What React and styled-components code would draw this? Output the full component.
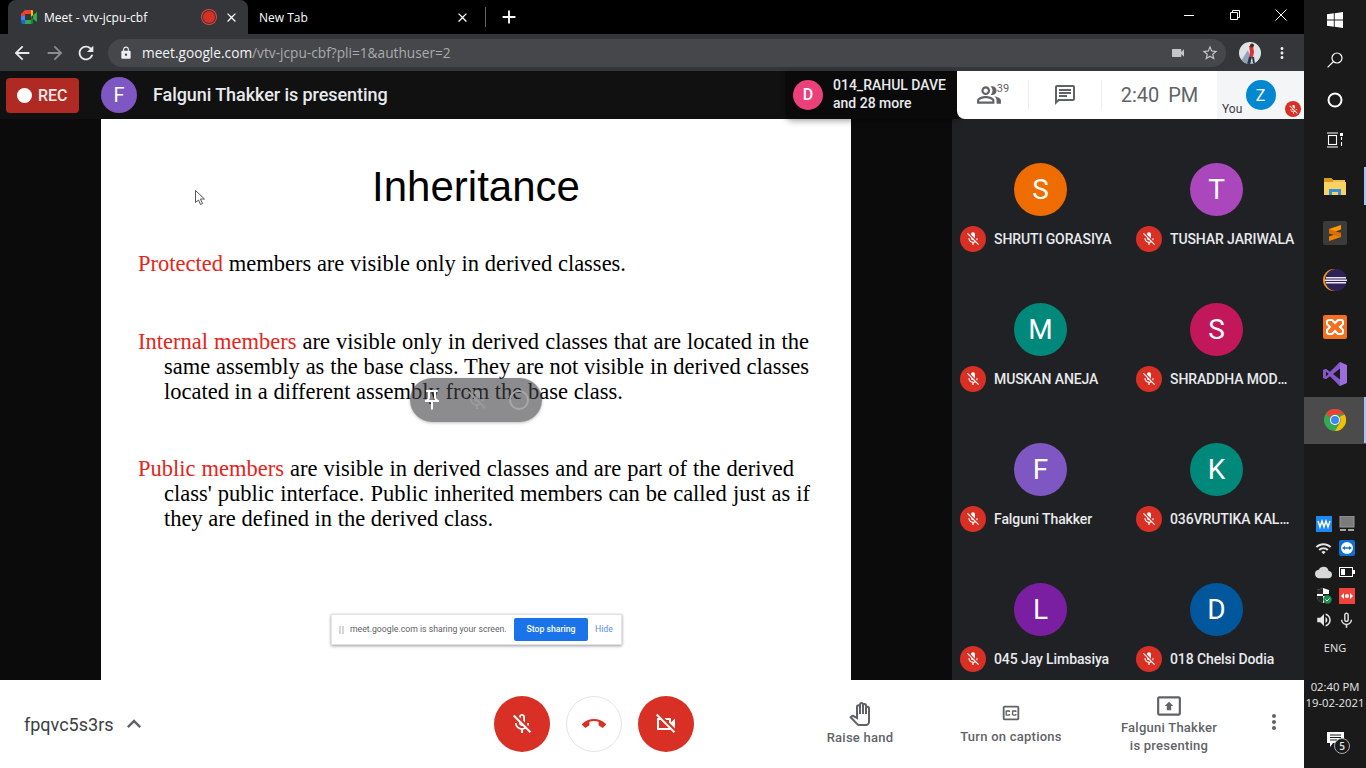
import React from 'react';
import styled, { createGlobalStyle } from 'styled-components';
import {
  MdArrowBack, MdArrowForward, MdRefresh, MdLock, MdStarBorder, MdVideocam, MdMoreVert,
  MdClose, MdAdd, MdMicOff, MdOutlineMicOff, MdOutlineVideocamOff, MdCallEnd, MdOutlinePeopleAlt, MdOutlineChat,
  MdOutlineClosedCaption, MdOutlinePresentToAll, MdOutlinePanTool, MdExpandLess,
  MdOutlinePushPin, MdCloud, MdVolumeUp, MdMicNone, MdWifi,
} from 'react-icons/md';

const GlobalStyle = createGlobalStyle`
  html, body { margin: 0; padding: 0; height: 100%; overflow: hidden; background: #000; }
  * { box-sizing: border-box; }
  body { font-family: Roboto, "Liberation Sans", sans-serif; }
`;

const people = [
  { letter: 'S', color: '#ef6c00', name: 'SHRUTI GORASIYA' },
  { letter: 'T', color: '#ab47bc', name: 'TUSHAR JARIWALA' },
  { letter: 'M', color: '#00897b', name: 'MUSKAN ANEJA' },
  { letter: 'S', color: '#c2185b', name: 'SHRADDHA MODHIYA' },
  { letter: 'F', color: '#7e57c2', name: 'Falguni Thakker' },
  { letter: 'K', color: '#00897b', name: '036VRUTIKA KALARIYA' },
  { letter: 'L', color: '#7b1fa2', name: '045 Jay Limbasiya' },
  { letter: 'D', color: '#01579b', name: '018 Chelsi Dodia' },
];

const Screen = styled.div`
  display: flex;
  width: 1366px;
  height: 768px;
  overflow: hidden;
`;

const Main = styled.div`
  width: 1304px;
  display: flex;
  flex-direction: column;
`;

/* browser chrome */
const TabStrip = styled.div`
  height: 34px;
  background: #000;
  display: flex;
  align-items: flex-end;
  padding-left: 8px;
  color: #fff;
  font-family: "Open Sans", sans-serif;
  font-size: 12px;
`;

const Tab = styled.div`
  width: ${p => p.$width}px;
  height: 34px;
  display: flex;
  align-items: center;
  padding-left: ${p => p.$pad}px;
  padding-right: 9px;
  border-radius: 8px 8px 0 0;
  background: ${p => (p.$active ? '#35363a' : 'transparent')};
  svg { flex: none; }
`;

const TabTitle = styled.span`
  flex: 1;
  white-space: nowrap;
  margin-left: ${p => p.$gap || 0}px;
`;

const RecordDot = styled.span`
  width: 12px;
  height: 12px;
  margin-right: 9px;
  border-radius: 50%;
  background: #d93025;
  box-shadow: 0 0 0 1px #35363a, 0 0 0 2px #e8453c;
`;

const TabDivider = styled.span`
  width: 1px;
  height: 20px;
  margin: 0 12px 7px 6px;
  align-self: flex-end;
  background: #5f6368;
`;

const NewTab = styled.span`
  display: flex;
  align-self: center;
`;

const WindowControls = styled.div`
  margin-left: auto;
  display: flex;
  align-self: flex-start;
  padding-top: 9px;
`;

const WindowButton = styled.span`
  width: 46px;
  height: 12px;
  display: flex;
  align-items: center;
  justify-content: center;
`;

const Toolbar = styled.div`
  height: 37px;
  background: #35363a;
  display: flex;
  align-items: center;
  color: #e8eaed;
`;

const NavButton = styled.span`
  width: ${p => p.$width}px;
  display: flex;
  justify-content: center;
  color: ${p => (p.$dim ? '#8b8d90' : '#e8eaed')};
`;

const Omnibox = styled.div`
  width: 1118px;
  height: 28px;
  margin-left: 3px;
  border-radius: 14px;
  background: #46474a;
  display: flex;
  align-items: center;
  padding: 0 7px 0 11px;
  font-family: "Open Sans", sans-serif;
  font-size: 13.7px;
  color: #a9abae;
`;

const Url = styled.span`
  margin-left: 9px;
  flex: 1;
  b { font-weight: 400; color: #f1f3f4; }
`;

const OmniIcon = styled.span`
  display: flex;
  margin-left: ${p => p.$gap}px;
  color: #c4c6c9;
`;

const Profile = styled.span`
  width: 22px;
  height: 22px;
  margin-left: 13px;
  border-radius: 50%;
  overflow: hidden;
  display: flex;
`;

/* meet header */
const Header = styled.header`
  height: 48px;
  background: #111;
  display: flex;
  align-items: center;
  padding-left: 6px;
  position: relative;
  z-index: 2;
`;

const RecButton = styled.div`
  width: 73px;
  height: 35px;
  border-radius: 4px;
  background: #b02a24;
  color: #f6e9e8;
  display: flex;
  align-items: center;
  padding-left: 11px;
  gap: 6px;
  font-size: 16px;
  font-weight: 500;
`;

const RecDot = styled.span`
  width: 15px;
  height: 15px;
  border-radius: 50%;
  background: #fff;
`;

const Avatar = styled.span`
  flex: none;
  width: ${p => p.$size}px;
  height: ${p => p.$size}px;
  border-radius: 50%;
  background: ${p => p.$color};
  color: #fff;
  font-size: ${p => p.$font}px;
  display: flex;
  align-items: center;
  justify-content: center;
`;

const PresenterAvatar = styled(Avatar)`
  margin-left: 22px;
`;

const Presenter = styled.span`
  margin: 0 0 2px 16px;
  color: #e8eaed;
  font-size: 18px;
  font-weight: 500;
  letter-spacing: -.07px;
`;

const SpeakerCard = styled.div`
  margin-left: auto;
  width: 172px;
  height: 48px;
  padding-left: 8px;
  display: flex;
  align-items: center;
  gap: 10px;
  background: #0a0a0a;
  border-radius: 0 0 0 8px;
  box-shadow: 0 2px 6px rgba(0, 0, 0, .35);
  color: #e8eaed;
  font-size: 14px;
  font-weight: 500;
  line-height: 18px;
`;

const SpeakerText = styled.div`
  margin-bottom: 2px;
`;

const InfoBar = styled.div`
  width: 347px;
  height: 48px;
  background: #fff;
  border-radius: 0 0 0 8px;
  display: flex;
  align-items: center;
  color: #5f6368;
  position: relative;
`;

const InfoCell = styled.div`
  width: ${p => p.$width}px;
  height: 30px;
  display: flex;
  align-items: center;
  justify-content: center;
  border-right: ${p => (p.$divider ? '1px solid #eceef0' : 'none')};
`;

const PeopleCount = styled.sup`
  font-size: 11px;
  align-self: flex-start;
  margin: 3px 0 0 -5px;
  line-height: 12px;
`;

const Clock = styled.div`
  width: 115px;
  text-align: center;
  font-size: 20px;
  word-spacing: 4px;
`;

const SelfView = styled.div`
  flex: 1;
  height: 48px;
  background: #f3f5f7;
  position: relative;
  display: flex;
  justify-content: center;
  align-items: center;
`;

const YouLabel = styled.span`
  position: absolute;
  left: 5px;
  bottom: 3px;
  font-size: 12px;
  color: #3c4043;
`;

const MicBadge = styled.span`
  flex: none;
  width: ${p => p.$size}px;
  height: ${p => p.$size}px;
  border-radius: 50%;
  background: #d93025;
  color: #fff;
  display: flex;
  align-items: center;
  justify-content: center;
`;

const SelfMic = styled(MicBadge)`
  position: absolute;
  right: 3px;
  bottom: 2px;
`;

/* middle stage */
const Stage = styled.div`
  height: 561px;
  display: flex;
  background: #0b0b0b;
`;

const Slide = styled.section`
  width: 750px;
  margin-left: 101px;
  background: #fff;
  position: relative;
  padding: 45px 0 0 37px;
  font-family: "Liberation Serif", serif;
  font-size: 22.5px;
  line-height: 25px;
  color: #000;
`;

const SlideTitle = styled.h1`
  margin: 0 0 41px -37px;
  font-family: "Liberation Sans", sans-serif;
  font-weight: 400;
  font-size: 42px;
  line-height: 46px;
  text-align: center;
  color: #000;
`;

const SlidePara = styled.p`
  margin: 0 0 ${p => p.$after}px;
  white-space: nowrap;
`;

const SlideLine = styled.span`
  display: block;
  width: ${p => p.$width}px;
  margin-left: ${p => (p.$hang ? 26 : 0)}px;
  text-align: justify;
  text-align-last: justify;
`;

const Red = styled.span`
  color: #e8241a;
`;

const Cursor = styled.svg`
  position: absolute;
  left: 94px;
  top: 71px;
`;

const FloatPill = styled.div`
  position: absolute;
  left: 309px;
  top: 259px;
  width: 132px;
  height: 44px;
  border-radius: 22px;
  background: rgba(63, 64, 66, .6);
  box-shadow: 0 1px 3px rgba(0, 0, 0, .25);
  display: flex;
  align-items: center;
  justify-content: space-between;
  padding: 0 11px 0 10px;
`;

const PillIcon = styled.span`
  display: flex;
  color: ${p => p.$color};
`;

const PillRing = styled.span`
  width: 20px;
  height: 20px;
  margin-right: 2px;
  border-radius: 50%;
  border: 2px solid #a6a7a9;
`;

const ShareBar = styled.div`
  position: absolute;
  left: 230px;
  top: 495px;
  width: 291px;
  height: 31px;
  background: #fff;
  border: 1px solid #e2e3e5;
  box-shadow: 0 1px 3px rgba(0, 0, 0, .4);
  display: flex;
  align-items: center;
  padding-left: 7px;
  font-family: Roboto, sans-serif;
  font-size: 8.7px;
  line-height: 1;
  color: #5f6368;
`;

const Grip = styled.span`
  width: 5px;
  height: 8px;
  margin-right: 6px;
  border-left: 2px solid #d5d6d8;
  border-right: 2px solid #d5d6d8;
`;

const ShareText = styled.span`
  width: 157px;
  white-space: nowrap;
`;

const StopButton = styled.span`
  width: 74px;
  height: 23px;
  margin-left: 7px;
  border-radius: 2px;
  background: #1a73e8;
  color: #fff;
  font-weight: 500;
  display: flex;
  align-items: center;
  justify-content: center;
`;

const HideLink = styled.span`
  margin-left: 7px;
  color: #5b8ee0;
`;

const Participants = styled.aside`
  width: 352px;
  margin-left: 101px;
  background: #202124;
  padding-top: 44.4px;
  display: grid;
  grid-template-columns: 176px 176px;
  grid-auto-rows: 140px;
  overflow: hidden;
`;

const Tile = styled.div`
  padding-left: 8px;
  display: flex;
  flex-direction: column;
  min-width: 0;
`;

const TileAvatar = styled(Avatar)`
  margin: 0 0 9.6px 54px;
`;

const TileName = styled.div`
  display: flex;
  align-items: center;
  gap: 8px;
  color: #e8eaed;
  font-size: 14px;
  font-weight: 500;
  letter-spacing: -.1px;
`;

const NameText = styled.span`
  width: 126px;
  white-space: nowrap;
  overflow: hidden;
  text-overflow: ellipsis;
`;

/* bottom bar */
const BottomBar = styled.footer`
  height: 88px;
  background: #fff;
  display: flex;
  align-items: center;
  color: #5f6368;
`;

const MeetingCode = styled.div`
  width: 494px;
  padding-left: 24px;
  display: flex;
  align-items: center;
  gap: 6px;
  font-size: 18px;
  color: #3c4043;
  svg { color: #5f6368; }
`;

const CallControls = styled.div`
  display: flex;
  gap: 16px;
`;

const RoundButton = styled.span`
  width: 56px;
  height: 56px;
  border-radius: 50%;
  display: flex;
  align-items: center;
  justify-content: center;
  background: ${p => (p.$outlined ? '#fff' : '#d93025')};
  color: ${p => (p.$outlined ? '#d93025' : '#fff')};
  border: ${p => (p.$outlined ? '1px solid #e3e4e6' : 'none')};
`;

const Action = styled.div`
  width: ${p => p.$width}px;
  margin-left: ${p => p.$gap}px;
  display: flex;
  flex-direction: column;
  align-items: center;
  font-size: 13px;
  line-height: 18px;
  font-weight: 500;
  letter-spacing: .25px;
  color: #5f6368;
  text-align: center;
  white-space: nowrap;
`;

const ActionIcon = styled.span`
  display: flex;
  margin-bottom: ${p => p.$gap}px;
`;

const MoreButton = styled.span`
  display: flex;
  margin-left: 46px;
  margin-top: -4px;
  color: #5f6368;
`;

/* windows taskbar */
const Taskbar = styled.nav`
  width: 62px;
  height: 768px;
  background: #1a1a1a;
  display: flex;
  flex-direction: column;
  color: #fff;
`;

const SysSlot = styled.div`
  height: 40px;
  display: flex;
  align-items: center;
  justify-content: center;
`;

const AppList = styled.div`
  margin-top: 3px;
`;

const AppSlot = styled.div`
  height: 46.8px;
  display: flex;
  align-items: center;
  justify-content: center;
  position: relative;
  background: ${p => (p.$active ? '#4b4b4b' : 'transparent')};
  &::after {
    content: '';
    display: ${p => (p.$running ? 'block' : 'none')};
    position: absolute;
    right: 0;
    top: 50%;
    width: 2px;
    height: ${p => (p.$active ? 46 : 38)}px;
    transform: translateY(-50%);
    background: #a9c2ee;
  }
`;

const Tray = styled.div`
  margin-top: auto;
  display: flex;
  flex-direction: column;
  align-items: center;
  color: #e6e6e6;
  font-family: "Open Sans", sans-serif;
`;

const TrayGrid = styled.div`
  display: grid;
  grid-template-columns: 23px 23px;
  grid-auto-rows: 24px;
  align-items: center;
  justify-items: center;
`;

const TrayText = styled.div`
  font-size: ${p => p.$size}px;
  line-height: 16px;
  text-align: center;
  margin-top: ${p => p.$gap || 0}px;
  white-space: nowrap;
`;

const NoticeSlot = styled.div`
  height: 40px;
  margin-top: 8px;
  margin-bottom: 9px;
  position: relative;
  width: 30px;
  display: flex;
  align-items: center;
  justify-content: center;
`;

const NoticeCount = styled.span`
  position: absolute;
  right: 0;
  bottom: 5px;
  width: 16px;
  height: 16px;
  border-radius: 50%;
  border: 1px solid #aaa;
  background: #1a1a1a;
  font-size: 10px;
  font-weight: 600;
  line-height: 14px;
  text-align: center;
`;

const MeetLogo = () => (
  <svg width="16" height="14" viewBox="0 0 16 14">
    <path d="M4 0h6v4H4v2H0V4z" fill="#ea4335" />
    <path d="M0 6h4v4H0z" fill="#4285f4" />
    <path d="M0 10h4v4H2a2 2 0 0 1-2-2z" fill="#1967d2" />
    <path d="M4 10h6v4H4z" fill="#34a853" />
    <path d="M10 0h1a1 1 0 0 1 1 1v4l-2 2z" fill="#fbbc04" />
    <path d="M10 7l2 2v4a1 1 0 0 1-1 1h-1z" fill="#188038" />
    <path d="M12 5l4-3v10l-4-3z" fill="#34a853" />
  </svg>
);

const ProfilePhoto = () => (
  <svg width="22" height="22" viewBox="0 0 22 22">
    <rect width="22" height="22" fill="#dfe3e6" />
    <path d="M0 22L9 8l4 14z" fill="#8fa3b5" />
    <path d="M10 4l4 0 1 6-1 5h-4l1-5z" fill="#d8333a" />
    <circle cx="13" cy="3.500" r="2" fill="#4a2c22" />
    <path d="M10 15l-2 7h3l2-7zM13 15l1 7h2l-1-7z" fill="#26364a" />
  </svg>
);

const WindowsLogo = () => (
  <svg width="16" height="16" viewBox="0 0 16 16" fill="#fff">
    <path d="M0 2.300l6.800-1V7.600H0zM7.700 1.200L16 0v7.600H7.700zM0 8.400h6.800v6.300l-6.800-1zM7.700 8.400H16V16l-8.300-1.200z" />
  </svg>
);

const SearchGlyph = () => (
  <svg width="16" height="16" viewBox="0 0 16 16" fill="none" stroke="#fff" strokeWidth="1.200">
    <circle cx="10" cy="6" r="5" />
    <path d="M6.500 9.500L.6 15.400" />
  </svg>
);

const CortanaRing = () => (
  <svg width="16" height="16" viewBox="0 0 16 16" fill="none" stroke="#fff" strokeWidth="2">
    <circle cx="8" cy="8" r="6.500" />
  </svg>
);

const TaskViewGlyph = () => (
  <svg width="16" height="16" viewBox="0 0 16 16" fill="none" stroke="#fff" strokeWidth="1.100">
    <path d="M0 1h11M0 15h11" />
    <rect x="1.500" y="3.500" width="8" height="9" />
    <path d="M14.500 5v3M14.500 10v4" />
    <rect x="13" y="1" width="3" height="3" fill="#fff" stroke="none" />
  </svg>
);

const FolderIcon = () => (
  <svg width="22" height="18" viewBox="0 0 22 18">
    <path d="M0 2a1 1 0 0 1 1-1h6l2 2h12v14H0z" fill="#f0c14b" />
    <path d="M0 1h7l2 2v2H0z" fill="#d99a1c" />
    <path d="M0 5h22v13H0z" fill="#fad165" />
    <path d="M5 18v-6h12v6h-3v-3H8v3z" fill="#2f93d6" />
  </svg>
);

const SublimeIcon = () => (
  <svg width="24" height="24" viewBox="0 0 24 24">
    <rect width="24" height="24" rx="2" fill="#3b3b3b" />
    <path d="M18 4v4.500L6 12.500V8z" fill="#ff9800" />
    <path d="M6 20v-4.500L18 11.500V16z" fill="#f08200" />
    <path d="M6 8l12 4v4L6 12.500z" fill="#d96f00" />
  </svg>
);

const EclipseIcon = () => (
  <svg width="24" height="24" viewBox="0 0 24 24">
    <circle cx="11" cy="12" r="11" fill="#f7941e" />
    <circle cx="13" cy="12" r="11" fill="#2c2255" />
    <path d="M3 9h20v1.500H3zM2 11.500h22V13H2zM3 14h20v1.500H3z" fill="#e9e6f2" />
  </svg>
);

const XamppIcon = () => (
  <svg width="24" height="24" viewBox="0 0 24 24">
    <rect width="24" height="24" rx="2" fill="#f37021" />
    <path d="M6 5h3l3 3 3-3h3a2 2 0 0 1 2 2v2l-3 3 3 3v2a2 2 0 0 1-2 2h-3l-3-3-3 3H6a2 2 0 0 1-2-2v-2l3-3-3-3V7a2 2 0 0 1 2-2z" fill="none" stroke="#fff" strokeWidth="2" />
  </svg>
);

const VisualStudioIcon = () => (
  <svg width="24" height="24" viewBox="0 0 24 24">
    <path d="M17 0l7 3v18l-7 3-10-10-4 3-3-1V8l3-1 4 3z" fill="#9a6fdc" />
    <path d="M17 0L7 10 3 7 0 8v8l3 1 4-3 10 10z" fill="#7d4fc4" opacity=".75" />
    <path d="M17 6.500v11L10 12zM3 9.500v5L5.500 12z" fill="#1a1a1a" />
  </svg>
);

const ChromeIcon = () => (
  <svg width="22" height="22" viewBox="0 0 22 22">
    <circle cx="11" cy="11" r="11" fill="#34a853" />
    <path d="M11 0a11 11 0 0 1 9.530 5.500H11a5.500 5.500 0 0 0-5.200 3.700L2.400 3.900A11 11 0 0 1 11 0z" fill="#ea4335" />
    <path d="M20.530 5.500A11 11 0 0 1 11 22l4.500-7.500A5.500 5.500 0 0 0 15.500 8z" fill="#fbbc04" />
    <circle cx="11" cy="11" r="5" fill="#fff" />
    <circle cx="11" cy="11" r="4" fill="#4285f4" />
  </svg>
);

const WavesTray = () => (
  <svg width="16" height="16" viewBox="0 0 16 16">
    <rect width="16" height="16" fill="#1e88f5" />
    <path d="M2 5l2 6 2-6 2 6 2-6 2 6 2-6" fill="none" stroke="#fff" strokeWidth="1.400" />
  </svg>
);

const MonitorTray = () => (
  <svg width="16" height="16" viewBox="0 0 16 16">
    <rect x="1" y="0" width="14" height="11" fill="#7b7b7b" stroke="#9a9a9a" />
    <path d="M1 13h6v2H1zM9 13h6v2H9z" fill="#a5a5a5" />
  </svg>
);

const TeamViewerTray = () => (
  <svg width="16" height="16" viewBox="0 0 16 16">
    <rect width="16" height="16" rx="2" fill="#0e6fd6" />
    <circle cx="8" cy="8" r="6" fill="#fff" />
    <path d="M3 8l3-2v1.300h4V6l3 2-3 2V8.700H6V10z" fill="#0e6fd6" />
  </svg>
);

const BatteryTray = () => (
  <svg width="16" height="10" viewBox="0 0 16 10" fill="none">
    <rect x=".5" y=".5" width="13" height="9" stroke="#fff" />
    <rect x="2" y="2" width="4" height="6" fill="#fff" />
    <rect x="14" y="3" width="2" height="4" fill="#fff" />
  </svg>
);

const ShieldTray = () => (
  <svg width="16" height="16" viewBox="0 0 16 16">
    <path d="M7 0l6 2v6c0 4-3 6-6 7-3-1-6-3-6-7V2z" fill="#fff" />
    <path d="M7 0v15c-3-1-6-3-6-7h12V6H1V2z" fill="#111" opacity=".9" />
    <circle cx="11.500" cy="11.500" r="4.200" fill="#1c8f4a" />
    <path d="M9.500 11.500l1.500 1.500 2.500-2.500" fill="none" stroke="#fff" />
  </svg>
);

const RedTray = () => (
  <svg width="16" height="16" viewBox="0 0 16 16">
    <rect width="16" height="16" fill="#f0443a" />
    <path d="M2 8l3-3v6zM14 8l-3-3v6z" fill="#fff" />
    <circle cx="8" cy="8" r="2" fill="#fff" />
  </svg>
);

const NoticeGlyph = () => (
  <svg width="17" height="15" viewBox="0 0 17 15">
    <path d="M0 0h17v11H6l-3 4v-4H0z" fill="#fff" />
    <path d="M3 3h11M3 5.500h11M3 8h7" stroke="#1a1a1a" />
  </svg>
);

const Slides = () => (
  <Slide>
    <SlideTitle>Inheritance</SlideTitle>
    <SlidePara $after={53}>
      <SlideLine $width={488}><Red>Protected</Red> members are visible only in derived classes.</SlideLine>
    </SlidePara>
    <SlidePara $after={52}>
      <SlideLine $width={671}><Red>Internal members</Red> are visible only in derived classes that are located in the</SlideLine>
      <SlideLine $hang $width={645}>same assembly as the base class. They are not visible in derived classes</SlideLine>
      <SlideLine $hang $width={459}>located in a different assembly from the base class.</SlideLine>
    </SlidePara>
    <SlidePara $after={0}>
      <SlideLine $width={656}><Red>Public members</Red> are visible in derived classes and are part of the derived</SlideLine>
      <SlideLine $hang $width={646}>class' public interface. Public inherited members can be called just as if</SlideLine>
      <SlideLine $hang $width={329}>they are defined in the derived class.</SlideLine>
    </SlidePara>

    <Cursor width="10" height="16" viewBox="0 0 10 16">
      <path d="M.5.500v12l3-2.500 2 4.500 2-1-2-4.500h4z" fill="#fff" stroke="#555" />
    </Cursor>

    <FloatPill>
      <PillIcon $color="#fff"><MdOutlinePushPin size={24} /></PillIcon>
      <PillIcon $color="#9a9b9d"><MdMicOff size={24} /></PillIcon>
      <PillRing />
    </FloatPill>

    <ShareBar>
      <Grip />
      <ShareText>meet.google.com is sharing your screen.</ShareText>
      <StopButton>Stop sharing</StopButton>
      <HideLink>Hide</HideLink>
    </ShareBar>
  </Slide>
);

const App = () => (
  <Screen>
    <GlobalStyle />
    <Main>
      <TabStrip>
        <Tab $active $width={240} $pad={13}>
          <MeetLogo />
          <TabTitle $gap={7}>Meet - vtv-jcpu-cbf</TabTitle>
          <RecordDot />
          <MdClose size={15} />
        </Tab>
        <Tab $width={231} $pad={11}>
          <TabTitle>New Tab</TabTitle>
          <MdClose size={15} />
        </Tab>
        <TabDivider />
        <NewTab><MdAdd size={22} /></NewTab>
        <WindowControls>
          <WindowButton>
            <svg width="12" height="12" viewBox="0 0 12 12" stroke="#fff" fill="none"><path d="M1 6.500h10" /></svg>
          </WindowButton>
          <WindowButton>
            <svg width="12" height="12" viewBox="0 0 12 12" stroke="#fff" fill="none"><path d="M1.500 3.500h7v7h-7zM3.500 3V1.500h7v7H9" /></svg>
          </WindowButton>
          <WindowButton>
            <svg width="12" height="12" viewBox="0 0 12 12" stroke="#fff" fill="none"><path d="M.5.500l11 11M11.500.500l-11 11" /></svg>
          </WindowButton>
        </WindowControls>
      </TabStrip>

      <Toolbar>
        <NavButton $width={44}><MdArrowBack size={22} /></NavButton>
        <NavButton $width={22} $dim><MdArrowForward size={22} /></NavButton>
        <NavButton $width={39}><MdRefresh size={22} /></NavButton>
        <Omnibox>
          <MdLock size={14} color="#eceef0" />
          <Url><b>meet.google.com</b>/vtv-jcpu-cbf?pli=1&amp;authuser=2</Url>
          <OmniIcon $gap={0}><MdVideocam size={16} /></OmniIcon>
          <OmniIcon $gap={15}><MdStarBorder size={18} /></OmniIcon>
        </Omnibox>
        <Profile><ProfilePhoto /></Profile>
        <NavButton $width={42}><MdMoreVert size={18} /></NavButton>
      </Toolbar>

      <Header>
        <RecButton><RecDot />REC</RecButton>
        <PresenterAvatar $size={36} $color="#7e57c2" $font={20}>F</PresenterAvatar>
        <Presenter>Falguni Thakker is presenting</Presenter>
        <SpeakerCard>
          <Avatar $size={30} $color="#ec407a" $font={16}>D</Avatar>
          <SpeakerText>014_RAHUL DAVE<br />and 28 more</SpeakerText>
        </SpeakerCard>
        <InfoBar>
          <InfoCell $width={72} $divider>
            <MdOutlinePeopleAlt size={26} />
            <PeopleCount>39</PeopleCount>
          </InfoCell>
          <InfoCell $width={73} $divider><MdOutlineChat size={24} /></InfoCell>
          <Clock>2:40 PM</Clock>
          <SelfView>
            <Avatar $size={30} $color="#0288d1" $font={16}>Z</Avatar>
            <YouLabel>You</YouLabel>
            <SelfMic $size={16}><MdMicOff size={11} /></SelfMic>
          </SelfView>
        </InfoBar>
      </Header>

      <Stage>
        <Slides />
        <Participants>
          {people.map(person => (
            <Tile key={person.name}>
              <TileAvatar $size={53} $color={person.color} $font={28}>{person.letter}</TileAvatar>
              <TileName>
                <MicBadge $size={26}><MdMicOff size={16} /></MicBadge>
                <NameText>{person.name}</NameText>
              </TileName>
            </Tile>
          ))}
        </Participants>
      </Stage>

      <BottomBar>
        <MeetingCode>fpqvc5s3rs <MdExpandLess size={28} /></MeetingCode>
        <CallControls>
          <RoundButton><MdOutlineMicOff size={24} /></RoundButton>
          <RoundButton $outlined><MdCallEnd size={24} /></RoundButton>
          <RoundButton><MdOutlineVideocamOff size={24} /></RoundButton>
        </CallControls>
        <Action $width={68} $gap={132}>
          <ActionIcon $gap={3}><MdOutlinePanTool size={24} /></ActionIcon>
          Raise hand
        </Action>
        <Action $width={104} $gap={65}>
          <ActionIcon $gap={4}><MdOutlineClosedCaption size={22} /></ActionIcon>
          Turn on captions
        </Action>
        <Action $width={94} $gap={59}>
          <ActionIcon $gap={0}><MdOutlinePresentToAll size={26} /></ActionIcon>
          Falguni Thakker<br />is presenting
        </Action>
        <MoreButton><MdMoreVert size={24} /></MoreButton>
      </BottomBar>
    </Main>

    <Taskbar>
      <SysSlot><WindowsLogo /></SysSlot>
      <SysSlot><SearchGlyph /></SysSlot>
      <SysSlot><CortanaRing /></SysSlot>
      <SysSlot><TaskViewGlyph /></SysSlot>
      <AppList>
        <AppSlot $running><FolderIcon /></AppSlot>
        <AppSlot><SublimeIcon /></AppSlot>
        <AppSlot><EclipseIcon /></AppSlot>
        <AppSlot><XamppIcon /></AppSlot>
        <AppSlot><VisualStudioIcon /></AppSlot>
        <AppSlot $active $running><ChromeIcon /></AppSlot>
      </AppList>
      <Tray>
        <TrayGrid>
          <WavesTray />
          <MonitorTray />
          <MdWifi size={17} />
          <TeamViewerTray />
          <MdCloud size={17} color="#d8d8d8" />
          <BatteryTray />
          <ShieldTray />
          <RedTray />
          <MdVolumeUp size={18} />
          <MdMicNone size={19} />
        </TrayGrid>
        <TrayText $size={11} $gap={8}>ENG</TrayText>
        <TrayText $size={11.300} $gap={23}>02:40 PM<br />19-02-2021</TrayText>
        <NoticeSlot>
          <NoticeGlyph />
          <NoticeCount>5</NoticeCount>
        </NoticeSlot>
      </Tray>
    </Taskbar>
  </Screen>
);

export default App;
